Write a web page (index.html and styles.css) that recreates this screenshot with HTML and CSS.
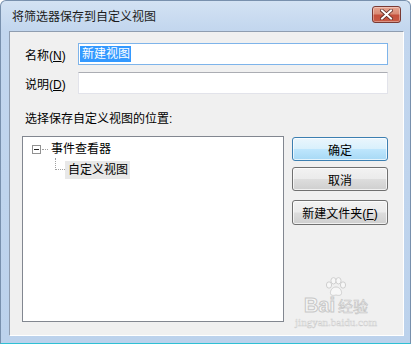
FILE: index.html
```html
<!DOCTYPE html>
<html lang="zh-CN">
<head>
    <meta charset="UTF-8">
    <title>将筛选器保存到自定义视图</title>
    <link rel="stylesheet" href="styles.css">
</head>
<body>

<div class="window">
    <!-- Title bar -->
    <div class="titlebar">
        <span class="title">将筛选器保存到自定义视图</span>
        <div class="close-btn">
            <svg width="13" height="11" viewBox="0 0 13 11">
                <path d="M2 1.5 L11 9.5 M11 1.5 L2 9.5" stroke="#5a2a22" stroke-width="3.6" stroke-linecap="square"/>
                <path d="M2 1.5 L11 9.5 M11 1.5 L2 9.5" stroke="#fff" stroke-width="2" stroke-linecap="square"/>
            </svg>
        </div>
    </div>

    <div class="client">
        <div class="fields">
            <label class="field-label">名称(<u>N</u>)</label>
            <div class="input focused"><span class="sel">新建视图</span></div>
            <label class="field-label">说明(<u>D</u>)</label>
            <div class="input"></div>
        </div>

        <div class="section-label">选择保存自定义视图的位置:</div>

        <div class="main">
            <div class="tree">
                <div class="node root">
                    <span class="expander"><span class="minus"></span></span>
                    <span class="dots-h"></span>
                    <span class="node-text">事件查看器</span>
                </div>
                <div class="node child">
                    <span class="branch"></span>
                    <span class="node-text selected">自定义视图</span>
                </div>
            </div>

            <div class="buttons">
                <button class="btn default">确定</button>
                <button class="btn">取消</button>
                <button class="btn">新建文件夹(<u>F</u>)</button>
            </div>
        </div>

        <!-- watermark -->
        <div class="watermark">
            <svg class="paw" width="22" height="20" viewBox="0 0 22 20">
                <g fill="#f7f7f7" stroke="#cfcfcf" stroke-width="1">
                    <ellipse cx="4" cy="8" rx="2.6" ry="3.2"/>
                    <ellipse cx="8.5" cy="3.8" rx="2.6" ry="3.2"/>
                    <ellipse cx="13.5" cy="3.8" rx="2.6" ry="3.2"/>
                    <ellipse cx="18" cy="8" rx="2.6" ry="3.2"/>
                    <path d="M11 10 C7 10 5 14 5.5 16.5 C6 19 9 18.5 11 18 C13 18.5 16 19 16.5 16.5 C17 14 15 10 11 10 Z"/>
                </g>
            </svg>
            <div class="wm-logo"><span class="wm-bai">Bai</span><span class="wm-jy">经验</span></div>
            <div class="wm-url">jingyan.baidu.com</div>
        </div>
    </div>
</div>

</body>
</html>
```

FILE: styles.css
```css
html, body {
    margin: 0;
    padding: 0;
}
body {
    width: 411px;
    height: 344px;
    overflow: hidden;
    font-family: "Liberation Sans", "Noto Sans CJK SC", sans-serif;
    font-size: 12px;
    color: #000;
    background: #fff;
}
.window {
    box-sizing: border-box;
    width: 411px;
    height: 344px;
    padding: 0 6px 7px 8px;
    border: 1px solid #7890ad;
    border-bottom: 1px solid #2fc0d4;
    border-radius: 6px 6px 0 0;
    background: linear-gradient(#d3e2f3 0, #c2d6ee 30px, #bcd2ec 100%);
    display: flex;
    flex-direction: column;
}
.titlebar {
    height: 30px;
    display: flex;
    align-items: center;
    justify-content: space-between;
    padding-left: 3px;
    flex-shrink: 0;
}
.title {
    color: #1b1b1b;
    margin-top: -2px;
}
.close-btn {
    width: 27px;
    height: 15px;
    margin-right: 3px;
    margin-top: -4px;
    border: 1px solid #7a3a34;
    border-radius: 3px;
    background: linear-gradient(#e7a491 0, #d98b75 45%, #c5503c 55%, #c75a44 100%);
    box-shadow: inset 0 0 0 1px rgba(255, 255, 255, 0.35);
    display: flex;
    align-items: center;
    justify-content: center;
}
.client {
    position: relative;
    flex: 1;
    background: #f0f0f0;
    border: 1px solid #8f9db0;
    border-right-color: #fff;
    border-bottom-color: #fff;
    padding: 11px 15px 13px 12px;
    display: flex;
    flex-direction: column;
}
.fields {
    display: grid;
    grid-template-columns: 56px 1fr;
    row-gap: 7px;
    align-items: center;
}
.field-label {
    padding-left: 3px;
}
.field-label u, .btn u {
    text-decoration-thickness: 1px;
    text-underline-offset: 1px;
}
.input {
    box-sizing: border-box;
    height: 22px;
    background: #fff;
    border: 1px solid #e2e3ea;
    border-top-color: #abadb3;
    padding: 2px 1px;
    display: flex;
    align-items: center;
}
.input.focused {
    border-color: #7eb4ea;
}
.sel {
    background: #3399ff;
    color: #fff;
    padding: 0 1px 0 2px;
    line-height: 16px;
}
.section-label {
    margin-top: 17px;
    padding-left: 3px;
    line-height: 16px;
}
.main {
    flex: 1;
    display: flex;
    gap: 8px;
    margin-top: 9px;
}
.tree {
    box-sizing: border-box;
    width: 262px;
    background: #fff;
    border: 1px solid #828790;
    padding-top: 4px;
}
.node {
    display: flex;
    align-items: center;
    height: 16px;
}
.root {
    padding-left: 9px;
}
.expander {
    box-sizing: border-box;
    width: 9px;
    height: 9px;
    border: 1px solid #919191;
    background: #fff;
    display: flex;
    align-items: center;
    justify-content: center;
}
.minus {
    width: 5px;
    height: 1px;
    background: #222;
}
.dots-h {
    width: 6px;
    border-top: 1px dotted #a0a0a0;
    margin: 0 1px;
}
.node-text {
    line-height: 16px;
    padding: 0 2px;
}
.child {
    height: 18px;
    margin-top: 4px;
    padding-left: 32px;
    align-items: stretch;
}
.branch {
    width: 9px;
    height: 11px;
    margin-top: -3px;
    border-left: 1px dotted #a0a0a0;
    border-bottom: 1px dotted #a0a0a0;
}
.selected {
    background: #e8e8e8;
    line-height: 18px;
    padding: 0 2px 0 3px;
}
.buttons {
    display: flex;
    flex-direction: column;
    gap: 6px;
    margin-top: 1px;
}
.btn {
    box-sizing: border-box;
    width: 96px;
    height: 24px;
    font: inherit;
    color: #000;
    border: 1px solid #707070;
    border-radius: 3px;
    background: linear-gradient(#f2f2f2 0, #ebebeb 49%, #dddddd 51%, #cfcfcf 100%);
    box-shadow: inset 0 0 0 1px rgba(255, 255, 255, 0.7);
    padding: 0;
}
.btn.default {
    border-color: #3c7fb1;
    background: linear-gradient(#eaf6fd 0, #d9f0fc 49%, #bee6fd 51%, #a7d9f5 100%);
}
.btn:last-child {
    margin-top: 3px;
    height: 25px;
}
.watermark {
    position: absolute;
    right: 21px;
    bottom: 7px;
    width: 92px;
    display: flex;
    flex-direction: column;
    align-items: center;
}
.paw {
    display: block;
    margin-bottom: -1px;
}
.wm-logo {
    display: flex;
    align-items: baseline;
    gap: 3px;
    line-height: 19px;
}
.wm-bai {
    font-size: 20px;
    font-weight: bold;
    color: #f6f6f6;
    -webkit-text-stroke: 1px #c8c8c8;
}
.wm-jy {
    font-size: 15px;
    color: #f6f6f6;
    -webkit-text-stroke: 0.6px #c4c4c4;
}
.wm-url {
    font-family: "Liberation Serif", serif;
    font-size: 11px;
    color: #f6f6f6;
    -webkit-text-stroke: 0.4px #cacaca;
}
```
